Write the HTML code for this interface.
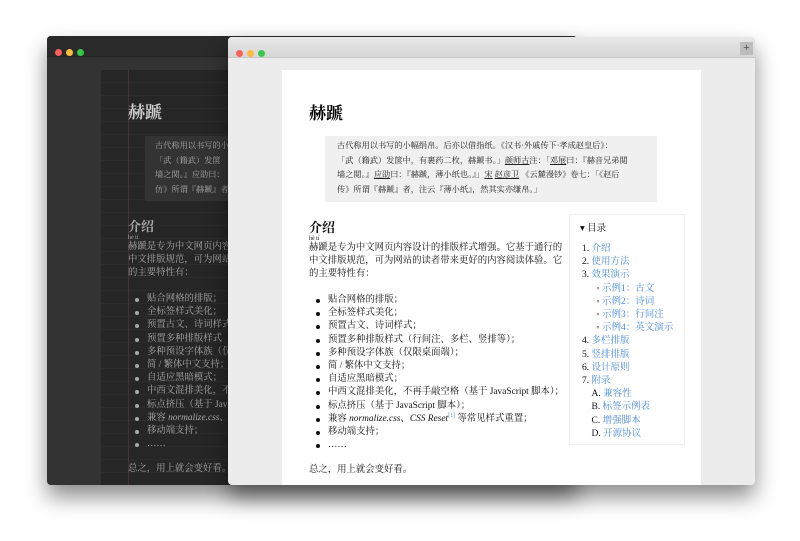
<!DOCTYPE html>
<html><head><meta charset="utf-8"><style>
*{margin:0;padding:0;box-sizing:border-box}
body{width:800px;height:541px;background:#fff;position:relative;overflow:hidden;font-family:"Liberation Serif","Noto Serif CJK SC",serif}
.win{position:absolute;border-radius:4px;overflow:hidden;box-shadow:0 12px 22px rgba(0,0,0,.45)}
.dots{position:absolute;left:8px;top:7px}
.dots i{display:inline-block;width:7px;height:7px;border-radius:50%;margin-right:4px}
.dark{left:47px;top:36px;width:530px;height:449px;background:#333}
.dark .tb{height:21px;background:#2a2a2a;border-bottom:1px solid #222}
.dark .pg{position:absolute;left:54px;top:34px;right:0;bottom:0;background:#262626;background-image:repeating-linear-gradient(#262626 0 12px,#2c2c2c 12px 13px)}
.dark .rl{position:absolute;left:81px;top:34px;bottom:0;width:1px;background:#4a3030}
.light{left:228px;top:37px;width:527px;height:448px;background:#ececec}
.light .tb{height:21px;background:linear-gradient(#e8e8e8,#d6d6d6);border-bottom:1px solid #c8c8c8}
.plus{position:absolute;right:2px;top:5px;width:13px;height:13px;background:#bdbdbd;color:#555;font:11px/13px "Liberation Sans",sans-serif;text-align:center}
.paper{position:absolute;left:54px;top:33px;width:419px;bottom:0;background:#fff}
.t{position:absolute;white-space:nowrap;color:#111}
h1{position:absolute;font-size:17px;font-weight:bold}
.bq{position:absolute;background:#f0f0f0;font-size:8.2px;line-height:14.7px;padding:3px 0 0 12px;color:#222}
.bq u{text-decoration:underline}
.p{font-size:9.4px;line-height:13px}
ul{list-style:none}
li{font-size:9.4px;line-height:13.2px;position:relative;padding-left:12px}
li:before{content:"";position:absolute;left:0;top:5px;width:4px;height:4px;border-radius:50%;background:currentColor}
.toc{position:absolute;border:1px solid #eee;background:#fff;font-size:9.5px;line-height:13.2px}
.toc a{color:#4a8bd9}
.dark .t{color:#aaa}
</style></head><body>

<div class="win dark">
 <div class="tb"><div class="dots"><i style="background:#fc605c"></i><i style="background:#fdbc40"></i><i style="background:#34c84a"></i></div></div>
 <div class="pg"></div><div class="rl"></div>
 <div class="t" style="left:81px;top:62px;font-size:17px;font-weight:bold;color:#ccc!important">赫蹏</div>
 <div style="position:absolute;left:98px;top:100px;width:200px;height:65px;background:#333"></div>
 <div class="t" style="left:108px;top:103px;font-size:8.2px;line-height:14.7px">古代称用以书写的小<br>「武（籍武）发箧<br>墙之関。』应劭曰：<br>仿》所谓『赫蹏』者</div>
 <div class="t" style="left:81px;top:180px;font-size:13px;font-weight:bold">介绍</div>
 <div class="t" style="left:81px;top:199px;font-size:6px">hè tí</div>
 <div class="t p" style="left:81px;top:205px">赫蹏是专为中文网页内容设<br>中文排版规范，可为网站的<br>的主要特性有：</div>
 <ul class="t" style="left:88px;top:257px"><li>贴合网格的排版；</li><li>全标签样式美化；</li><li>预置古文、诗词样式；</li><li>预置多种排版样式（行</li><li>多种预设字体族（仅限</li><li>简 / 繁体中文支持；</li><li>自适应黑暗模式；</li><li>中西文混排美化，不再</li><li>标点挤压（基于 JavaS</li><li>兼容 <i>normalize.css</i>、C</li><li>移动端支持；</li><li>……</li></ul>
 <div class="t p" style="left:81px;top:427px">总之，用上就会变好看。</div>
</div>

<div class="win light">
 <div class="tb"><div class="dots"><i style="background:#fc605c"></i><i style="background:#fdbc40"></i><i style="background:#34c84a"></i></div><div class="plus">+</div></div>
 <div class="paper"></div>
 <h1 style="left:81px;top:62px">赫蹏</h1>
 <div class="bq" style="left:97px;top:99px;width:332px;height:66px"><span style="white-space:nowrap">古代称用以书写的小幅绢帛。后亦以借指纸。《汉书·外戚传下·孝成赵皇后》：<br>「武（籍武）发箧中，有裹药二枚，赫蹏书。」<u>颜师古</u>注：「<u>邓展</u>曰：『赫音兄弟閲<br>墙之閲。』<u>应劭</u>曰：『赫蹏，薄小纸也。』」<u>宋</u> <u>赵彦卫</u> 《云麓漫钞》卷七：「《赵后<br>传》所谓『赫蹏』者，注云『薄小纸』，然其实亦缣帛。」</span></div>
 <div class="t" style="left:81px;top:180px;font-size:13px;font-weight:bold">介绍</div>
 <div class="t" style="left:81px;top:199px;font-size:6px">hè tí</div>
 <div class="t p" style="left:81px;top:205px">赫蹏是专为中文网页内容设计的排版样式增强。它基于通行的<br>中文排版规范，可为网站的读者带来更好的内容阅读体验。它<br>的主要特性有：</div>
 <ul class="t" style="left:88px;top:257px"><li>贴合网格的排版；</li><li>全标签样式美化；</li><li>预置古文、诗词样式；</li><li>预置多种排版样式（行间注、多栏、竖排等）；</li><li>多种预设字体族（仅限桌面端）；</li><li>简 / 繁体中文支持；</li><li>自适应黑暗模式；</li><li>中西文混排美化，不再手敲空格（基于 JavaScript 脚本）；</li><li>标点挤压（基于 JavaScript 脚本）；</li><li>兼容 <i>normalize.css</i>、<i>CSS Reset</i><sup style="font-size:6px;color:#4a8bd9;line-height:0">[1]</sup> 等常见样式重置；</li><li>移动端支持；</li><li>……</li></ul>
 <div class="t p" style="left:81px;top:427px">总之，用上就会变好看。</div>
 <div class="toc" style="left:341px;top:177px;width:116px;height:231px">
  <div class="t" style="left:10px;top:8px">▾ 目录</div>
  <div class="t" style="left:12px;top:28px">1. <a>介绍</a><br>2. <a>使用方法</a><br>3. <a>效果演示</a><br>&nbsp;&nbsp;&nbsp;&nbsp;&nbsp;&nbsp;◦ <a>示例1：古文</a><br>&nbsp;&nbsp;&nbsp;&nbsp;&nbsp;&nbsp;◦ <a>示例2：诗词</a><br>&nbsp;&nbsp;&nbsp;&nbsp;&nbsp;&nbsp;◦ <a>示例3：行间注</a><br>&nbsp;&nbsp;&nbsp;&nbsp;&nbsp;&nbsp;◦ <a>示例4：英文演示</a><br>4. <a>多栏排版</a><br>5. <a>竖排排版</a><br>6. <a>设计原则</a><br>7. <a>附录</a><br>&nbsp;&nbsp;&nbsp;&nbsp;A. <a>兼容性</a><br>&nbsp;&nbsp;&nbsp;&nbsp;B. <a>标签示例表</a><br>&nbsp;&nbsp;&nbsp;&nbsp;C. <a>增强脚本</a><br>&nbsp;&nbsp;&nbsp;&nbsp;D. <a>开源协议</a></div>
 </div>
</div>
</body></html>
